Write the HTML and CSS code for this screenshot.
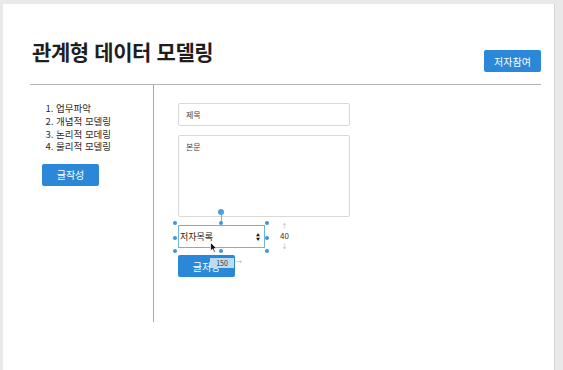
FILE: index.html
```html
<!DOCTYPE html>
<html lang="ko">
<head>
    <meta charset="UTF-8">
    <meta name="viewport" content="width=device-width, initial-scale=1.0">
    <title>관계형 데이터 모델링</title>
    <link rel="stylesheet" href="styles.css">
</head>
<body>
    <div class="page">
        <header class="top">
            <h1>관계형 데이터 모델링</h1>
            <button class="btn">저자참여</button>
        </header>
        <div class="main">
            <aside class="side">
                <ol class="menu">
                    <li>업무파악</li>
                    <li>개념적 모델링</li>
                    <li>논리적 모데링</li>
                    <li>물리적 모델링</li>
                </ol>
                <button class="btn">글작성</button>
            </aside>
            <form class="editor">
                <input type="text" class="field" placeholder="제목">
                <textarea class="field area" placeholder="본문"></textarea>
                <div class="picked">
                    <div class="select">
                        <span>저자목록</span>
                        <span class="arrows">&#9650;<br>&#9660;</span>
                    </div>
                    <span class="handle h-tl"></span>
                    <span class="handle h-tc"></span>
                    <span class="handle h-tr"></span>
                    <span class="handle h-ml"></span>
                    <span class="handle h-mr"></span>
                    <span class="handle h-bl"></span>
                    <span class="handle h-bc"></span>
                    <span class="handle h-br"></span>
                    <span class="rotate"></span>
                    <span class="dim-h"><i>&#8593;</i><b>40</b><i>&#8595;</i></span>
                    <svg class="cursor" width="8" height="11" viewBox="0 0 8 11"><path d="M0.5 0.5 L0.5 9 L2.6 7 L4 10.3 L5.4 9.7 L4 6.6 L7 6.6 Z" fill="#111" stroke="#fff" stroke-width="0.8"/></svg>
                </div>
                <div class="save-row">
                    <button type="button" class="btn">글저장</button>
                    <span class="dim-w">150</span>
                    <span class="dim-arrow">&#8594;</span>
                </div>
            </form>
        </div>
    </div>
</body>
</html>
```

FILE: styles.css
```css
body {
    margin: 0;
    background-color: #e9e9e9;
    font-family: "Noto Sans CJK KR", "Noto Sans", sans-serif;
    color: #222;
}
.page {
    margin: 4px 8px 0 3px;
    height: 366px;
    background-color: #fff;
    border-right: 1px solid #d4d4d4;
    padding: 0 13px 0 27px;
}
.top {
    display: flex;
    justify-content: space-between;
    align-items: flex-end;
    height: 79px;
    border-bottom: 1px solid #b5b5b5;
    padding-bottom: 1px;
}
h1 {
    margin: 0 0 17px 2px;
    font-size: 21px;
    letter-spacing: -0.4px;
    font-weight: bold;
    line-height: 30px;
    color: #1e1e1e;
}
.btn {
    background-color: #2b88d8;
    color: #fff;
    border: none;
    border-radius: 2px;
    font-family: inherit;
    font-size: 10px;
    width: 57px;
    height: 22px;
    padding: 0;
    margin-bottom: 11px;
}
.main {
    display: flex;
}
.side {
    width: 124px;
    height: 237px;
    border-right: 1px solid #a8a8a8;
    padding-left: 12px;
    box-sizing: border-box;
}
.menu {
    margin: 17px 0 7px 0;
    padding-left: 14px;
    font-size: 9.5px;
    line-height: 12.8px;
    color: #2a2a2a;
}
.side .btn {
    margin: 0;
}
.editor {
    padding: 18px 0 0 24px;
    display: flex;
    flex-direction: column;
    align-items: flex-start;
}
.field {
    width: 172px;
    height: 23px;
    box-sizing: border-box;
    border: 1px solid #d9d9d9;
    border-radius: 2px;
    padding: 0 7px;
    font-family: inherit;
    font-size: 8px;
    margin: 0 0 9px 0;
}
.field::placeholder {
    color: #444;
}
.area {
    height: 82px;
    padding-top: 5px;
    resize: none;
    margin-bottom: 8px;
}
.picked {
    position: relative;
}
.select {
    width: 87px;
    height: 23px;
    box-sizing: border-box;
    border: 1px solid #6db3e6;
    display: flex;
    align-items: center;
    justify-content: space-between;
    padding: 0 4px 0 1px;
    font-size: 9px;
    color: #222;
}
.arrows {
    font-size: 4px;
    line-height: 4px;
    color: #111;
}
.handle {
    position: absolute;
    width: 4px;
    height: 4px;
    border-radius: 50%;
    background-color: #3d95dc;
}
.h-tl { left: -5px; top: -4px; }
.h-tc { left: 41px; top: -4px; }
.h-tr { left: 87px; top: -4px; }
.h-ml { left: -5px; top: 11px; }
.h-mr { left: 87px; top: 11px; }
.h-bl { left: -5px; top: 24px; }
.h-bc { left: 41px; top: 24px; }
.h-br { left: 87px; top: 24px; }
.rotate {
    position: absolute;
    left: 40px;
    top: -16px;
    width: 6px;
    height: 6px;
    border-radius: 50%;
    background-color: #4aa0e0;
}
.rotate::after {
    content: "";
    position: absolute;
    left: 2.5px;
    top: 6px;
    width: 1px;
    height: 6px;
    background-color: #6db3e6;
}
.dim-h {
    position: absolute;
    left: 102px;
    top: -4px;
    display: flex;
    flex-direction: column;
    align-items: center;
    line-height: 10px;
}
.dim-h i {
    font-style: normal;
    font-size: 6px;
    color: #aaa;
}
.dim-h b {
    font-weight: normal;
    font-size: 8px;
    color: #333;
}
.cursor {
    position: absolute;
    left: 32px;
    top: 17px;
}
.save-row {
    position: relative;
    display: flex;
    margin-top: 7px;
}
.save-row .btn {
    margin: 0;
    width: 57px;
    height: 22px;
}
.dim-w {
    position: absolute;
    left: 32px;
    top: 3px;
    width: 24px;
    height: 10px;
    background-color: #bcdcf3;
    color: #333;
    font-size: 7px;
    line-height: 10px;
    text-align: center;
}
.dim-arrow {
    position: absolute;
    left: 58px;
    top: 2px;
    font-size: 6px;
    line-height: 10px;
    color: #aaa;
}
```
